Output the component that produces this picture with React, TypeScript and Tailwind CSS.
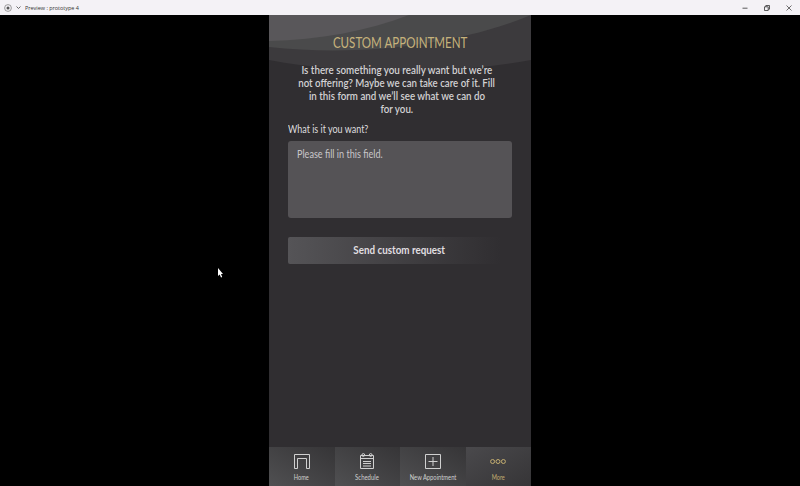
import React from 'react';

function TitleBar() {
  return (
    <header className="flex h-[15px] shrink-0 items-center justify-between bg-[#f4f2f6] text-[#333]">
      <div className="flex items-center pl-1">
        <svg className="size-2" viewBox="0 0 8 8" fill="none">
          <circle cx="4" cy="4" r="3.4" stroke="#777" strokeWidth="0.7" />
          <circle cx="4" cy="4" r="1.5" fill="#555" />
        </svg>
        <svg className="ml-[3.5px] size-[5px]" viewBox="0 0 5 5" fill="none">
          <path d="M.5 1.5 2.5 3.5 4.5 1.5" stroke="#444" strokeWidth="0.8" />
        </svg>
        <span className="ml-1 origin-left scale-x-[0.91] whitespace-nowrap font-['Open_Sans',sans-serif] text-[6px] leading-[8px]">Preview : prototype 4</span>
      </div>
      <div className="flex items-center gap-4 pr-2">
        <svg className="size-1.5" viewBox="0 0 6 6"><path d="M.5 3.2h5" stroke="#333" strokeWidth="0.8" /></svg>
        <svg className="size-1.5" viewBox="0 0 6 6" fill="none" stroke="#333" strokeWidth="0.8">
          <path d="M.5 1.8h3.7v3.7H.5zM1.8 1.8V.5h3.7v3.7H4.2" />
        </svg>
        <svg className="size-1.5" viewBox="0 0 6 6"><path d="m.5.5 5 5m0-5-5 5" stroke="#333" strokeWidth="0.7" /></svg>
      </div>
    </header>
  );
}

function Arcs() {
  return (
    <svg className="absolute left-0 top-0 h-16 w-[262px]" viewBox="0 0 262 64">
      <path d="M0 0H262V45C180 60 80 60 0 45Z" fill="#3c3a3d" />
      <path d="M0 0H262C190 30 90 42 0 32Z" fill="#4a4a4b" />
      <path d="M0 0H140C98 16 50 25 0 26Z" fill="#59575a" />
    </svg>
  );
}

function Tab({ label, tone, scale, children }: { label: string; tone: string; scale: string; children: React.ReactNode }) {
  return (
    <div className={`flex flex-1 flex-col items-center pt-[5px] ${tone}`}>
      <svg className="h-[19px] w-5 shrink-0" viewBox="0 0 20 19" fill="none" stroke="currentColor">{children}</svg>
      <span className={`mt-[2px] whitespace-nowrap text-[7px] leading-[8px] ${scale}`}>{label}</span>
    </div>
  );
}

const idleTone = 'bg-linear-to-tr from-[#505052] to-[#363537] text-[#d0d0d0]';
const activeTone = 'bg-linear-to-br from-[#4a494c] to-[#363537] text-[#c3ad70]';

export default function App() {
  return (
    <div className="flex h-[486px] w-[800px] flex-col overflow-hidden bg-black font-[Lato,sans-serif]">
      <TitleBar />
      <div className="relative flex min-h-0 flex-1 justify-center">
        <main className="relative flex w-[262px] flex-col bg-[#302e31] text-[#dedddf]">
          <Arcs />
          <h1 className="relative mt-[17px] flex justify-center whitespace-nowrap text-[15.5px] leading-[20px] text-[#c6b27b]">
            <span className="scale-x-[0.746]">CUSTOM APPOINTMENT</span>
          </h1>
          <div className="relative mt-[11px] flex flex-col items-center whitespace-nowrap pr-[7px] text-[11.2px] font-semibold leading-[13.1px] text-[#d2d1d3]">
            <span className="scale-x-[0.877]">Is there something you really want but we’re</span>
            <span className="scale-x-[0.866]">not offering? Maybe we can take care of it. Fill</span>
            <span className="scale-x-[0.872]">in this form and we’ll see what we can do</span>
            <span className="scale-x-[0.872]">for you.</span>
          </div>
          <div className="mx-[19px] mt-[7px] flex flex-col">
            <label className="origin-left scale-x-[0.775] whitespace-nowrap text-[11.6px] leading-[14px]">What is it you want?</label>
            <div className="mt-[5px] h-[77px] rounded-[3px] bg-[#555356] px-[9px] pt-[6px]">
              <div className="origin-left scale-x-[0.785] whitespace-nowrap text-[11.6px] leading-[14px] text-[#c9c7ca]">Please fill in this field.</div>
            </div>
            <button className="mt-[19px] flex h-[27px] items-center justify-center rounded-[2px] bg-linear-to-r from-[#555457] to-[#302e31] to-95% pb-[2px] pr-[2px] text-[11.4px] font-bold text-[#e0dfe1]">
              <span className="scale-x-[0.862] whitespace-nowrap">Send custom request</span>
            </button>
          </div>
          <nav className="mt-auto flex h-[39px]">
            <Tab label="Home" tone={idleTone} scale="scale-x-[0.8]">
              <path d="M2.5 16.5v-14h15v14h-3v-10h-9v10z" />
            </Tab>
            <Tab label="Schedule" tone={idleTone} scale="scale-x-[0.85]">
              <path d="M3.5 3.5h13v13h-13zM3.5 6.5h13M6 9.5h8M6 11.5h8M6 14h8" />
              <circle cx="6.3" cy="3" r="1.4" />
              <circle cx="13.7" cy="3" r="1.4" />
            </Tab>
            <Tab label="New Appointment" tone={idleTone} scale="scale-x-[0.83]">
              <path d="M2.5 2.5h15v14h-15zM10 5v9M5.5 9.5h9" />
            </Tab>
            <Tab label="More" tone={activeTone} scale="scale-x-[0.8]">
              <circle cx="4.6" cy="9.5" r="2" />
              <circle cx="10" cy="9.5" r="2" />
              <circle cx="15.4" cy="9.5" r="2" />
            </Tab>
          </nav>
        </main>
        <svg className="absolute left-[217px] top-[253px] h-[10px] w-[6px]" viewBox="0 0 6 10">
          <path d="M1 0v8l1.7-1.5L4 9.5l1.2-.6L4 6.1H6z" fill="#fff" />
        </svg>
      </div>
    </div>
  );
}
